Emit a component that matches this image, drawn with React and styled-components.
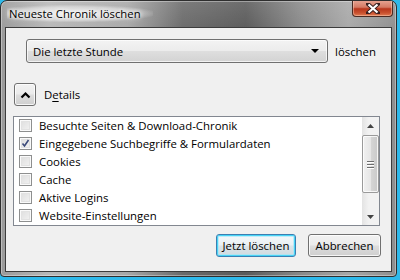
import React from "react";
import styled, { createGlobalStyle } from "styled-components";

const items = [
  { label: "Besuchte Seiten & Download-Chronik", checked: false },
  { label: "Eingegebene Suchbegriffe & Formulardaten", checked: true },
  { label: "Cookies", checked: false },
  { label: "Cache", checked: false },
  { label: "Aktive Logins", checked: false },
  { label: "Website-Einstellungen", checked: false },
];

function ClearHistoryDialog() {
  return (
    <Window>
      {/* TITLE BAR */}
      <TitleBar>
        <Title>Neueste Chronik löschen</Title>
        <CloseButton>
          <svg width="14" height="11" viewBox="0 0 14 11">
            <path
              d="M2 1 L12 10 M12 1 L2 10"
              stroke="#3a2020"
              strokeWidth="4"
              strokeLinecap="square"
            />
            <path
              d="M2.5 1.5 L11.5 9.5 M11.5 1.5 L2.5 9.5"
              stroke="#ffffff"
              strokeWidth="2.2"
            />
          </svg>
        </CloseButton>
      </TitleBar>
      {/* TITLE BAR */}

      {/* CLIENT AREA */}
      <Client>
        <RangeRow>
          <Select>
            <span>Die letzte Stunde</span>
            <SelectArrow />
          </Select>
          <Label>löschen</Label>
        </RangeRow>

        <DetailsRow>
          <ToggleButton>
            <svg width="11" height="8" viewBox="0 0 11 8">
              <path d="M1.5 6.5 L5.5 2.5 L9.5 6.5" stroke="#000" strokeWidth="2.2" fill="none" />
            </svg>
          </ToggleButton>
          <Label>
            D<u>e</u>tails
          </Label>
        </DetailsRow>

        <ListBox>
          <Rows>
            {items.map((item) => (
              <Row key={item.label}>
                <CheckBox>
                  {item.checked && (
                    <svg width="9" height="9" viewBox="0 0 9 9">
                      <path d="M1.5 4.5 L3.5 7 L7.5 1" stroke="#3b4a7a" strokeWidth="1.6" fill="none" />
                    </svg>
                  )}
                </CheckBox>
                {item.label}
              </Row>
            ))}
          </Rows>
          <ScrollBar>
            <ScrollArrow>
              <svg width="7" height="4" viewBox="0 0 7 4">
                <path d="M0 4 L3.5 0 L7 4 Z" fill="#444" />
              </svg>
            </ScrollArrow>
            <Track>
              <Thumb>
                <Grip />
                <Grip />
                <Grip />
              </Thumb>
            </Track>
            <ScrollArrow>
              <svg width="7" height="4" viewBox="0 0 7 4">
                <path d="M0 0 L7 0 L3.5 4 Z" fill="#444" />
              </svg>
            </ScrollArrow>
          </ScrollBar>
        </ListBox>

        <ButtonRow>
          <Button primary width={80}>
            Jetzt löschen
          </Button>
          <Button width={73}>Abbrechen</Button>
        </ButtonRow>
      </Client>
      {/* CLIENT AREA */}
    </Window>
  );
}

export default function App() {
  return (
    <>
      <GlobalStyle />
      <ClearHistoryDialog />
    </>
  );
}

const GlobalStyle = createGlobalStyle`
  html, body {
    margin: 0;
    width: 400px;
    height: 280px;
    overflow: hidden;
    background: #2fb9ea;
  }
  body {
    font-family: "Open Sans", "Noto Sans", sans-serif;
    font-size: 11.4px;
  }
`;

const Window = styled.div`
  width: 395px;
  height: 275px;
  border: 1px solid #2e2e2e;
  border-radius: 7px 7px 4px 4px;
  display: flex;
  flex-direction: column;
  overflow: hidden;
  background:
    linear-gradient(180deg, rgba(255, 255, 255, 0.12) 0%, rgba(0, 0, 0, 0) 12%),
    linear-gradient(
      90deg,
      #9a9a9a 0%,
      #b8b8b8 12%,
      #a8a8a8 32%,
      #6a6a6a 46%,
      #5a5a5a 62%,
      #8a8a8a 76%,
      #a8a8a8 88%,
      #8e8e8e 100%
    );
  box-shadow: inset 0 0 0 1px rgba(255, 255, 255, 0.35);
`;

const TitleBar = styled.div`
  height: 26px;
  display: flex;
  align-items: flex-start;
  padding-left: 6px;
`;

const Title = styled.span`
  margin-top: 4px;
  padding: 1px 12px 1px 2px;
  font-size: 11.3px;
  color: #000;
  background: radial-gradient(ellipse at 45% 50%, rgba(255, 255, 255, 0.8) 0%, rgba(255, 255, 255, 0.4) 55%, rgba(255, 255, 255, 0) 75%);
  text-shadow: 0 0 4px #fff, 0 0 6px #fff;
`;

const CloseButton = styled.div`
  margin-left: auto;
  margin-right: 3px;
  margin-top: -1px;
  width: 41px;
  height: 17px;
  display: flex;
  align-items: center;
  justify-content: center;
  box-sizing: border-box;
  border: 1px solid #4a2a22;
  border-top: none;
  border-radius: 0 0 4px 4px;
  background: linear-gradient(180deg, #e8a796 0%, #d47a64 45%, #b8361c 55%, #c8502e 80%, #e07a52 100%);
  box-shadow: inset 0 0 0 1px rgba(255, 220, 200, 0.45);
`;

const Client = styled.div`
  flex: 1;
  margin: 0 4px 4px 4px;
  border: 1px solid #3c3c3c;
  background: #f0f0f0;
  display: flex;
  flex-direction: column;
  color: #000;
`;

const RangeRow = styled.div`
  display: flex;
  align-items: center;
  gap: 7px;
  padding: 11px 0 0 20px;
`;

const Select = styled.div`
  width: 302px;
  height: 24px;
  box-sizing: border-box;
  border: 1px solid #707070;
  border-radius: 3px;
  background: linear-gradient(180deg, #f3f3f3 0%, #ececec 48%, #dedede 52%, #d3d3d3 100%);
  box-shadow: inset 0 0 0 1px rgba(255, 255, 255, 0.7);
  display: flex;
  align-items: center;
  justify-content: space-between;
  padding: 0 8px 0 6px;
`;

const SelectArrow = styled.span`
  width: 0;
  height: 0;
  border-left: 4px solid transparent;
  border-right: 4px solid transparent;
  border-top: 4px solid #000;
`;

const Label = styled.span`
  u {
    text-underline-offset: 2px;
  }
`;

const DetailsRow = styled.div`
  display: flex;
  align-items: center;
  gap: 8px;
  padding: 20px 0 0 8px;
`;

const ToggleButton = styled.div`
  width: 22px;
  height: 23px;
  box-sizing: border-box;
  border: 1px solid #707070;
  border-radius: 3px;
  background: linear-gradient(180deg, #f2f2f2 0%, #ebebeb 48%, #dddddd 52%, #cfcfcf 100%);
  box-shadow: inset 0 0 0 1px rgba(255, 255, 255, 0.8);
  display: flex;
  align-items: center;
  justify-content: center;
`;

const ListBox = styled.div`
  margin: 10px 0 0 7px;
  width: 367px;
  height: 110px;
  box-sizing: border-box;
  border: 1px solid #828790;
  background: #fff;
  display: flex;
`;

const Rows = styled.div`
  flex: 1;
  margin-top: -1px;
`;

const Row = styled.div`
  height: 18px;
  display: flex;
  align-items: center;
  gap: 7px;
  padding-left: 5px;
  white-space: nowrap;
  overflow: hidden;
`;

const CheckBox = styled.span`
  flex: none;
  width: 13px;
  height: 13px;
  box-sizing: border-box;
  border: 1px solid #8e8f8f;
  background: linear-gradient(135deg, #dcdcdc 0%, #f4f4f4 100%);
  box-shadow: inset 0 0 0 1px #fafafa, inset 0 0 0 2px #e2e2e2;
  display: flex;
  align-items: center;
  justify-content: center;
`;

const ScrollBar = styled.div`
  width: 17px;
  display: flex;
  flex-direction: column;
  background: linear-gradient(90deg, #e3e3e3 0%, #f2f2f2 40%, #f2f2f2 100%);
`;

const ScrollArrow = styled.div`
  height: 17px;
  display: flex;
  align-items: center;
  justify-content: center;
`;

const Track = styled.div`
  flex: 1;
  padding: 1px 0 0 0;
`;

const Thumb = styled.div`
  height: 58px;
  box-sizing: border-box;
  border: 1px solid #9a9a9a;
  border-radius: 2px;
  background: linear-gradient(90deg, #f1f1f1 0%, #e6e6e6 50%, #d6d6d6 51%, #c9c9c9 100%);
  box-shadow: inset 0 0 0 1px rgba(255, 255, 255, 0.8);
  display: flex;
  flex-direction: column;
  align-items: center;
  justify-content: center;
  gap: 2px;
`;

const Grip = styled.span`
  width: 7px;
  height: 1px;
  background: #6d6d6d;
  box-shadow: 0 1px 0 #fff;
`;

const ButtonRow = styled.div`
  display: flex;
  justify-content: flex-end;
  gap: 12px;
  padding: 8px 10px 0 0;
`;

const Button = styled.div`
  width: ${(p) => p.width}px;
  height: 23px;
  box-sizing: border-box;
  border: 1px solid ${(p) => (p.primary ? "#3c7fb1" : "#707070")};
  border-radius: 3px;
  background: ${(p) =>
    p.primary
      ? "linear-gradient(180deg, #f4f8fa 0%, #eaf0f3 48%, #dce4e8 52%, #d0dadf 100%)"
      : "linear-gradient(180deg, #f2f2f2 0%, #ebebeb 48%, #dddddd 52%, #cfcfcf 100%)"};
  box-shadow: ${(p) =>
    p.primary
      ? "inset 0 0 0 1px #48d4f6, inset 0 0 0 2px rgba(160,230,250,0.6)"
      : "inset 0 0 0 1px rgba(255, 255, 255, 0.8)"};
  display: flex;
  align-items: center;
  justify-content: center;
`;
